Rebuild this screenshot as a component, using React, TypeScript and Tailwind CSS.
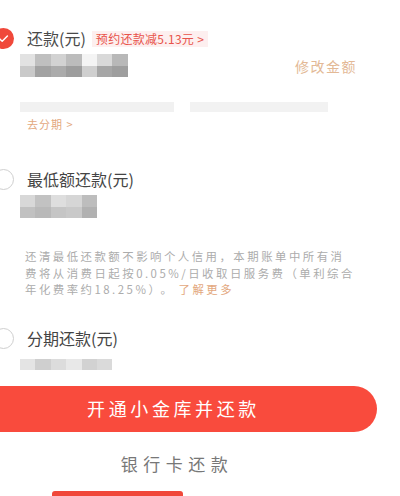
import React from 'react';

const FONT = { fontFamily: '"Noto Sans CJK SC", "Noto Sans", sans-serif' };

const Radio = ({ checked }: { checked?: boolean }) =>
  checked ? (
    <div className="w-[21px] h-[21px] -ml-[7px] rounded-full bg-[#f0483a] flex items-center justify-center shrink-0">
      <svg viewBox="0 0 20 20" className="w-[13px] h-[13px]">
        <path d="M4 10.5l4 3.8L16 6" fill="none" stroke="#fff" strokeWidth="2.2" strokeLinecap="round" strokeLinejoin="round" />
      </svg>
    </div>
  ) : (
    <div className="w-[21px] h-[21px] -ml-[7px] rounded-full border-[1.5px] border-[#cfcfcf] bg-white shrink-0" />
  );

const Mosaic = ({ rows }: { rows: string[][] }) => (
  <div className="flex flex-col">
    {rows.map((r, i) => (
      <div key={i} className="flex">
        {r.map((c, j) => (
          <div key={j} className={`h-[11.5px] w-[15.4px] ${c}`} />
        ))}
      </div>
    ))}
  </div>
);

const m1 = [
  ['bg-[#e2e2e2]', 'bg-[#bfbfbf]', 'bg-[#d2d2d2]', 'bg-[#bcbcbc]', 'bg-[#f4f4f4]', 'bg-[#d9d9d9]', 'bg-[#b8b8b8]'],
  ['bg-[#c9c9c9]', 'bg-[#a2a2a2]', 'bg-[#ababab]', 'bg-[#9d9d9d]', 'bg-[#cfcfcf]', 'bg-[#a6a6a6]', 'bg-[#9e9e9e]'],
];
const m2 = [
  ['bg-[#d8d8d8]', 'bg-[#c2c2c2]', 'bg-[#dedede]', 'bg-[#d6d6d6]', 'bg-[#bdbdbd]'],
  ['bg-[#c1c1c1]', 'bg-[#b9b9b9]', 'bg-[#c5c5c5]', 'bg-[#c9c9c9]', 'bg-[#b1b1b1]'],
];
const m3 = ['bg-[#e4e4e4]', 'bg-[#cfcfcf]', 'bg-[#dcdcdc]', 'bg-[#e8e8e8]', 'bg-[#d2d2d2]', 'bg-[#dadada]'];

export default function App() {
  return (
    <div className="w-[400px] h-[496px] bg-white overflow-hidden" style={FONT}>
      {/* full repayment */}
      <div className="pt-[28px] flex items-center">
        <Radio checked />
        <span className="ml-[13px] text-[16px] leading-[21px] text-[#4a4a4a]">还款(元)</span>
        <span className="ml-[6px] bg-[#fdefef] text-[#e8534a] text-[12px] leading-[16px] px-[4px] tracking-[0.3px]">
          预约还款减5.13元 &gt;
        </span>
      </div>
      <div className="mt-[5px] pl-[20px] pr-[43px] flex items-center justify-between">
        <Mosaic rows={m1} />
        <span className="text-[14px] text-[#e3b996] tracking-[1.5px] mt-[2px]">修改金额</span>
      </div>
      <div className="mt-[25px] pl-[20px] flex gap-[16px]">
        <div className="h-[10px] w-[154px] bg-[#f1f1f1]" />
        <div className="h-[10px] w-[138px] bg-[#f2f2f2]" />
      </div>
      <div className="mt-[5px] pl-[27px] text-[11px] leading-[14px] text-[#e3a87e] tracking-[1px]">去分期 &gt;</div>

      {/* minimum */}
      <div className="mt-[38px] flex items-center">
        <Radio />
        <span className="ml-[13px] text-[16px] leading-[21px] text-[#444]">最低额还款(元)</span>
      </div>
      <div className="mt-[5px] pl-[20px]">
        <Mosaic rows={m2} />
      </div>
      <p className="mt-[30px] pl-[25px] text-[11.4px] leading-[16.5px] text-[#acacac] tracking-[2.5px] whitespace-nowrap">
        还清最低还款额不影响个人信用，本期账单中所有消
        <br />
        费将从消费日起按0.05%/日收取日服务费（单利综合
        <br />
        年化费率约18.25%）<span className="ml-[4px]">。</span>
        <span className="ml-[4px] text-[#e3a87e]">了解更多</span>
      </p>

      {/* installment */}
      <div className="mt-[30px] flex items-center">
        <Radio />
        <span className="ml-[13px] text-[16px] leading-[21px] text-[#444]">分期还款(元)</span>
      </div>
      <div className="mt-[10px] pl-[20px] flex">
        {m3.map((c, i) => (
          <div key={i} className={`h-[11px] w-[15.4px] ${c}`} />
        ))}
      </div>

      <div className="mt-[16px] -ml-[30px] w-[407px] h-[46px] rounded-full bg-[#f94b3d] flex items-center justify-center">
        <span className="text-white text-[18px] tracking-[3.6px]">开通小金库并还款</span>
      </div>
      <div className="mt-[22px] text-center pr-[46px] text-[17px] leading-[20px] text-[#777] tracking-[5.5px]">银行卡还款</div>
      <div className="mt-[17px] ml-[52px] w-[131px] h-[10px] rounded-t-[3px] bg-[#f0483a]" />
    </div>
  );
}
